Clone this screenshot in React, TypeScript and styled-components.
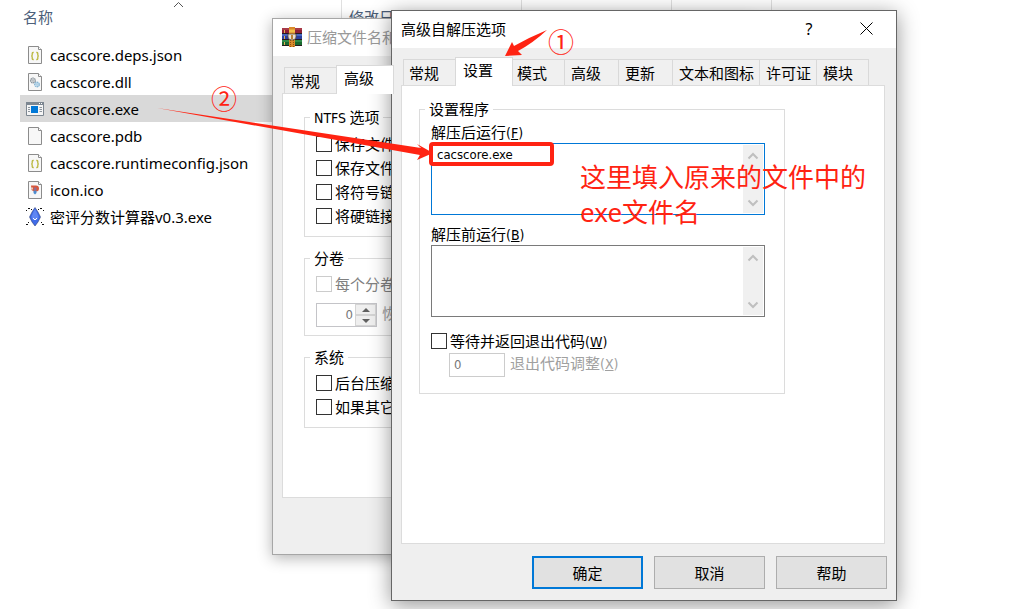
import React from 'react';
import styled, { createGlobalStyle } from 'styled-components';

const RED = '#ff2312';
const UI_FONT = '"Noto Sans", "Noto Sans CJK SC", sans-serif';
const DIALOG_FONT = '"Noto Sans CJK SC", "Noto Sans", sans-serif';
const TAHOMA = '"DejaVu Sans Condensed", "DejaVu Sans", sans-serif';

const GlobalStyle = createGlobalStyle`
  *, *::before, *::after { box-sizing: border-box; }
  body { margin: 0; background: #fff; color: #000; font-family: ${DIALOG_FONT}; font-size: 15px; }
  button, input, textarea { font: inherit; color: inherit; }
`;

const Desktop = styled.main`
  position: relative;
  min-height: 100vh;
  overflow: hidden;
`;

/* ---------- file list ---------- */

const Explorer = styled.section`
  padding-left: 20px;
`;

const HeaderRow = styled.div`
  display: grid;
  grid-template-columns: 322px 180px 150px 100px;
  height: 33px;
  margin-bottom: 8px;
  color: #4c607a;
`;

const HeaderCell = styled.div`
  position: relative;
  border-right: 1px solid #e0e0e0;
  padding: 6px 0 0 3px;
  line-height: 22px;
  &:nth-child(2) { padding-left: 7px; }
`;

const SortMark = styled.svg`
  position: absolute;
  top: 0;
  left: 153px;
`;

const FileList = styled.ul`
  list-style: none;
  margin: 0;
  padding: 0;
  width: 752px;
  font-family: ${UI_FONT};
`;

const FileRow = styled.li<{ $selected?: boolean }>`
  display: flex;
  align-items: center;
  gap: 5px;
  height: 27px;
  padding-left: 5px;
  background: ${(p) => (p.$selected ? '#d9d9d9' : 'transparent')};
`;

/* ---------- windows ---------- */

const Window = styled.section<{ $x: number; $y: number; $w: number; $active?: boolean }>`
  position: absolute;
  left: ${(p) => p.$x}px;
  top: ${(p) => p.$y}px;
  width: ${(p) => p.$w}px;
  border: 1px solid ${(p) => (p.$active ? '#666' : '#a6a6a6')};
  background: #efefef;
  box-shadow: ${(p) => (p.$active ? '0 4px 20px rgba(0,0,0,.42)' : '0 3px 14px rgba(0,0,0,.3)')};
`;

const TitleBar = styled.header<{ $inactive?: boolean }>`
  display: flex;
  align-items: center;
  gap: 5px;
  height: 37px;
  padding: 0 4px 2px 9px;
  background: #fff;
  color: ${(p) => (p.$inactive ? '#999' : '#000')};
`;

const Title = styled.h1`
  flex: 1;
  margin: 0;
  font-size: 15px;
  font-weight: 400;
  line-height: 20px;
`;

const CaptionButton = styled.button`
  display: grid;
  place-items: center;
  width: 52px;
  height: 35px;
  padding: 0;
  border: 0;
  background: none;
  font-size: 16px;
  font-family: ${UI_FONT};
`;

const TabBar = styled.div`
  display: flex;
  align-items: flex-end;
  height: 37px;
  padding: 0 11px;
`;

const Tab = styled.button<{ $w: number; $selected?: boolean; $indent?: number }>`
  width: ${(p) => p.$w}px;
  height: ${(p) => (p.$selected ? 29 : 26)}px;
  margin-bottom: ${(p) => (p.$selected ? -1 : 0)}px;
  padding: 0 0 ${(p) => (p.$selected ? 4 : 0)}px ${(p) => p.$indent ?? 6}px;
  border: 1px solid #d9d9d9;
  border-bottom: 0;
  border-left-width: ${(p) => (p.$selected ? 1 : 0)}px;
  background: ${(p) => (p.$selected ? '#fff' : '#f0f0f0')};
  text-align: left;
  white-space: nowrap;
  line-height: 20px;
  z-index: ${(p) => (p.$selected ? 1 : 0)};
  &:first-child { border-left-width: 1px; }
  &:has(+ [aria-selected='true']) { border-right-width: 0; }
`;

const Panel = styled.div<{ $minHeight: number }>`
  min-height: ${(p) => p.$minHeight}px;
  margin: 0 11px 0 9px;
  padding: 13px 99px 0 17px;
  border: 1px solid #dcdcdc;
  background: #fff;
`;

const BackPanel = styled(Panel)`
  padding: 13px 20px 0 21px;
`;

const Group = styled.fieldset`
  min-width: 0;
  margin: 0 0 11px;
  padding: 4px 11px 8px;
  border: 1px solid #dcdcdc;
`;

const Legend = styled.legend`
  margin-left: -6px;
  padding: 0 4px;
  line-height: 20px;
`;

const CheckRow = styled.div<{ $disabled?: boolean }>`
  display: flex;
  align-items: center;
  gap: 3px;
  height: 24px;
  color: ${(p) => (p.$disabled ? '#808080' : '#000')};
  white-space: nowrap;
  line-height: 20px;
`;

const CheckBox = styled.input.attrs({ type: 'checkbox' })`
  appearance: none;
  width: 16px;
  height: 16px;
  margin: 0;
  border: 1px solid #333;
  background: #fff;
  &:disabled { border-color: #ccc; }
`;

const SpinRow = styled.div`
  display: flex;
  gap: 5px;
  height: 24px;
  margin-top: 7px;
  color: #a0a0a0;
  line-height: 20px;
`;

const Spin = styled.div`
  display: flex;
  width: 61px;
  border: 1px solid #c4c4c8;
`;

const SpinInput = styled.input`
  flex: 1;
  min-width: 0;
  border: 0;
  padding: 0 2px 0 0;
  background: #fff;
  color: #777;
  text-align: right;
  font-family: ${TAHOMA};
  font-size: 13px;
`;

const SpinButtons = styled.div`
  display: grid;
  grid-template-rows: 1fr 1fr;
  width: 21px;
  background: #efefef;
`;

const SpinButton = styled.button`
  display: grid;
  place-items: center;
  padding: 0;
  border: 1px solid #d4d4d4;
  background: none;
`;

const FieldLabel = styled.label`
  display: block;
  height: 21px;
  line-height: 20px;
`;

const Latin = styled.span`
  font-family: ${TAHOMA};
  font-size: 14px;
`;

const Memo = styled.div<{ $focused?: boolean }>`
  display: flex;
  height: 72px;
  margin-bottom: 9px;
  padding: 1px;
  border: 1px solid ${(p) => (p.$focused ? '#0078d7' : '#7a7a7a')};
  background: #fff;
`;

const MemoText = styled.textarea`
  flex: 1;
  min-width: 0;
  margin: 0;
  padding: 1px 4px;
  border: 0;
  outline: 0;
  resize: none;
  overflow: hidden;
  background: transparent;
  font-family: ${TAHOMA};
  font-size: 13px;
  line-height: 18px;
`;

const ScrollBar = styled.div`
  display: flex;
  flex-direction: column;
  justify-content: space-between;
  width: 20px;
  background: #f0f0f0;
`;

const ScrollButton = styled.button`
  display: grid;
  place-items: center;
  height: 21px;
  padding: 0;
  border: 0;
  background: none;
`;

const ExitOptions = styled.div`
  padding-top: 3px;
`;

const ExitRow = styled.div`
  display: flex;
  gap: 5px;
  height: 24px;
  margin-left: 18px;
  color: #a0a0a0;
  line-height: 20px;
`;

const ExitInput = styled.input`
  width: 56px;
  padding: 0 4px;
  border: 1px solid #ccc;
  background: #fff;
  color: #777;
  font-family: ${TAHOMA};
  font-size: 13px;
`;

const SetupGroup = styled(Group)`
  padding: 3px 19px 16px 11px;
`;

const Footer = styled.footer`
  display: flex;
  justify-content: flex-end;
  gap: 11px;
  min-height: 56px;
  padding: 12px 9px 11px;
`;

const PushButton = styled.button<{ $primary?: boolean }>`
  width: 111px;
  height: 33px;
  padding: 0;
  border: ${(p) => (p.$primary ? '2px solid #0078d7' : '1px solid #adadad')};
  background: #e1e1e1;
  line-height: 20px;
`;

/* ---------- red marks over the windows ---------- */

const Arrows = styled.svg`
  position: absolute;
  left: 0;
  top: 0;
  pointer-events: none;
`;

const Mark = styled.span<{ $x: number; $y: number }>`
  position: absolute;
  left: ${(p) => p.$x}px;
  top: ${(p) => p.$y}px;
  color: ${RED};
  font-size: 26px;
  line-height: 30px;
`;

const Highlight = styled.div`
  position: absolute;
  left: 429px;
  top: 142px;
  width: 125px;
  height: 24px;
  border: 4px solid ${RED};
  border-radius: 4px;
  pointer-events: none;
`;

const Note = styled.p`
  position: absolute;
  left: 580px;
  top: 160px;
  margin: 0;
  color: ${RED};
  font-family: ${UI_FONT};
  font-size: 26px;
  line-height: 35px;
  white-space: nowrap;
`;

type IconKind = 'json' | 'dll' | 'exe' | 'blank' | 'ico' | 'app';

const Page = ({ children }: { children?: React.ReactNode }) => (
  <>
    <path d="M3.5 1.5h10l3 3v14h-13z" fill="#f7f7f7" stroke="#8c8c8c" />
    <path d="M13.5 1.5v3h3" fill="#fff" stroke="#8c8c8c" />
    {children}
  </>
);

const FileIcon = ({ kind }: { kind: IconKind }) => (
  <svg width="20" height="20" viewBox="0 0 20 20" aria-hidden="true">
    {kind === 'json' && (
      <Page>
        <path
          d="M8.700 7.500H8q-.8 0-.8.9v1.500q0 1-1 1 1 0 1 1v1.600q0 1 .8 1h.7M11.300 7.500h.7q.8 0 .8.9v1.500q0 1 1 1-1 0-1 1v1.600q0 1-.8 1h-.7"
          fill="none"
          stroke="#b9b63c"
          strokeWidth="1.3"
        />
      </Page>
    )}
    {kind === 'blank' && <Page />}
    {kind === 'dll' && (
      <Page>
        <circle cx="8" cy="8.500" r="2.400" fill="#eee" stroke="#8c969e" strokeWidth="1.300" strokeDasharray="1.500 .4" />
        <circle cx="8" cy="8.500" r=".9" fill="none" stroke="#8c969e" strokeWidth=".7" />
        <circle cx="12" cy="12.500" r="2.300" fill="#eaf4fb" stroke="#7fb2d2" strokeWidth="1.300" strokeDasharray="1.500 .4" />
        <circle cx="12" cy="12.500" r=".9" fill="none" stroke="#7fb2d2" strokeWidth=".7" />
      </Page>
    )}
    {kind === 'exe' && (
      <>
        <path d="M1.500 3.500h17v13h-17z" fill="#f5f5f5" stroke="#7d8791" />
        <path d="M1 3h18v3H1z" fill="#7d8791" />
        <path d="M14 4.500h1M16 4.500h1" stroke="#fff" />
        <path d="M6 7h7v7H6z" fill="#0078d7" />
        <path d="M3 8.500h2M3 10.500h2M3 12.500h2M14.500 8.500H17M14.500 10.500H17M14.500 12.500H17" stroke="#8c949c" />
      </>
    )}
    {kind === 'ico' && (
      <Page>
        <path d="M6 5.500h5q3 0 3 3t-3 3H9L6.500 10z" fill="#d8573c" />
        <path d="M6 7.500h2v2H6z" fill="#eec3b6" />
        <path d="M9 7.500h2.500V10H9z" fill="#8b6f96" />
        <path d="M8.500 10.500h3v2.500l-1.500 1.500-1.500-1.500z" fill="#4c8bd0" />
      </Page>
    )}
    {kind === 'app' && (
      <>
        <path
          d="M3 1.500h2M1.500 3v1M15 1.500h2M18.500 3v1M1 17.500h2M3 15.500h1M17 17.500h2M16 15.500h1M6 2.500h1M13 2.500h1"
          stroke="#111"
          fill="none"
        />
        <path d="M10 .500 13 5l2.500 5L13 15l-3 4-3-4-2.500-5L7 5z" fill="#3f6be8" stroke="#1b2a66" strokeWidth=".5" />
        <path d="M10 2 12 6l1.500 4-1.500 3H8l-1.500-3L8 6z" fill="#5f86f2" />
        <path d="M8 11 10 13l2-2" stroke="#fff" fill="none" />
      </>
    )}
  </svg>
);

const ArchiveIcon = () => (
  <svg width="20" height="20" viewBox="0 0 20 20" aria-hidden="true">
    <path d="M0 1h20v6H0z" fill="#8e1f35" />
    <path d="M0 1h20v2H0z" fill="#a83a48" />
    <path d="M0 7h20v6H0z" fill="#2a3f9e" />
    <path d="M0 7h20v2H0z" fill="#4866c0" />
    <path d="M0 13h20v6H0z" fill="#18682f" />
    <path d="M0 13h20v2H0z" fill="#2f8b48" />
    <path d="M0 6.500h20M0 12.500h20M0 18.500h20" stroke="#281a20" />
    <path d="M2.500 3v3M2.500 9v3M2.500 15v3" stroke="#e2b352" />
    <path d="M7 0h6v20H7z" fill="#d88a2b" />
    <path d="M8.500 13v7M11.500 13v7" stroke="#8d5115" strokeDasharray="1 1" />
    <path d="M6 7h8v3q0 3-4 3t-4-3z" fill="#e7e1d5" stroke="#5a4a38" strokeWidth=".8" />
    <path d="M9 8h2v4H9z" fill="#b98235" />
    <path d="M7 2.500h6v3H7z" fill="#f2bf48" />
  </svg>
);

const Chevron = ({ down }: { down?: boolean }) => (
  <svg width="12" height="8" viewBox="0 0 12 8" aria-hidden="true">
    <path d={down ? 'M1.500 1.500 6 6l4.500-4.500' : 'M1.500 6.500 6 2l4.500 4.500'} fill="none" stroke="#bfbfbf" strokeWidth="2" />
  </svg>
);

const Triangle = ({ down }: { down?: boolean }) => (
  <svg width="8" height="4" viewBox="0 0 8 4" aria-hidden="true">
    <path d={down ? 'M0 0h8L4 4z' : 'M0 4h8L4 0z'} fill="#606060" />
  </svg>
);

const files: { name: string; kind: IconKind; selected?: boolean }[] = [
  { name: 'cacscore.deps.json', kind: 'json' },
  { name: 'cacscore.dll', kind: 'dll' },
  { name: 'cacscore.exe', kind: 'exe', selected: true },
  { name: 'cacscore.pdb', kind: 'blank' },
  { name: 'cacscore.runtimeconfig.json', kind: 'json' },
  { name: 'icon.ico', kind: 'ico' },
  { name: '密评分数计算器v0.3.exe', kind: 'app' },
];

const tabs: { name: string; w: number; selected?: boolean; indent?: number }[] = [
  { name: '常规', w: 52, indent: 5 },
  { name: '设置', w: 58, selected: true, indent: 7 },
  { name: '模式', w: 52, indent: 4 },
  { name: '高级', w: 54 },
  { name: '更新', w: 54 },
  { name: '文本和图标', w: 87 },
  { name: '许可证', w: 57 },
  { name: '模块', w: 52 },
];

const Check = ({ id, text, disabled, hotkey }: { id: string; text: string; disabled?: boolean; hotkey?: string }) => (
  <CheckRow $disabled={disabled}>
    <CheckBox id={id} disabled={disabled} />
    <label htmlFor={id}>
      {text}
      {hotkey && <Latin>(<u>{hotkey}</u>)</Latin>}
    </label>
  </CheckRow>
);

const MemoField = ({ id, label, hotkey, value, focused }: { id: string; label: string; hotkey: string; value: string; focused?: boolean }) => (
  <>
    <FieldLabel htmlFor={id}>
      {label}
      <Latin>(<u>{hotkey}</u>)</Latin>
    </FieldLabel>
    <Memo $focused={focused}>
      <MemoText id={id} defaultValue={value} spellCheck={false} />
      <ScrollBar>
        <ScrollButton type="button" aria-label="向上滚动"><Chevron /></ScrollButton>
        <ScrollButton type="button" aria-label="向下滚动"><Chevron down /></ScrollButton>
      </ScrollBar>
    </Memo>
  </>
);

export default function App() {
  return (
    <Desktop>
      <GlobalStyle />
      <Explorer>
        <HeaderRow>
          <HeaderCell>
            名称
            <SortMark width="11" height="8" viewBox="0 0 11 8" aria-hidden="true">
              <path d="M1 7 5.500 2.500 10 7" fill="none" stroke="#555" />
            </SortMark>
          </HeaderCell>
          <HeaderCell>修改日</HeaderCell>
          <HeaderCell />
          <HeaderCell />
        </HeaderRow>
        <FileList>
          {files.map((f) => (
            <FileRow key={f.name} $selected={f.selected}>
              <FileIcon kind={f.kind} />
              <span>{f.name}</span>
            </FileRow>
          ))}
        </FileList>
      </Explorer>

      <Window $x={272} $y={18} $w={480}>
        <TitleBar $inactive>
          <ArchiveIcon />
          <Title>压缩文件名和</Title>
        </TitleBar>
        <TabBar role="tablist">
          <Tab type="button" role="tab" $w={52} $indent={5}>常规</Tab>
          <Tab type="button" role="tab" aria-selected="true" $w={58} $selected $indent={7}>高级</Tab>
        </TabBar>
        <BackPanel $minHeight={405}>
          <Group>
            <Legend><Latin>NTFS</Latin> 选项</Legend>
            <Check id="ntfs-security" text="保存文件" />
            <Check id="ntfs-streams" text="保存文件" />
            <Check id="ntfs-symlinks" text="将符号链" />
            <Check id="ntfs-hardlinks" text="将硬链接" />
          </Group>
          <Group>
            <Legend>分卷</Legend>
            <Check id="volume-pause" text="每个分卷" disabled />
            <SpinRow>
              <Spin>
                <SpinInput id="recovery" defaultValue="0" disabled />
                <SpinButtons>
                  <SpinButton type="button" aria-label="增加"><Triangle /></SpinButton>
                  <SpinButton type="button" aria-label="减少"><Triangle down /></SpinButton>
                </SpinButtons>
              </Spin>
              <label htmlFor="recovery">恢</label>
            </SpinRow>
          </Group>
          <Group>
            <Legend>系统</Legend>
            <Check id="sys-background" text="后台压缩" />
            <Check id="sys-wait" text="如果其它" />
          </Group>
        </BackPanel>
        <Footer />
      </Window>

      <Window $x={391} $y={10} $w={506} $active>
        <TitleBar>
          <Title>高级自解压选项</Title>
          <CaptionButton type="button" aria-label="帮助信息">?</CaptionButton>
          <CaptionButton type="button" aria-label="关闭">
            <svg width="13" height="13" viewBox="0 0 13 13" aria-hidden="true">
              <path d="M.5.5l12 12M12.500.5l-12 12" stroke="#000" fill="none" />
            </svg>
          </CaptionButton>
        </TitleBar>
        <TabBar role="tablist">
          {tabs.map((t) => (
            <Tab key={t.name} type="button" role="tab" aria-selected={!!t.selected} $w={t.w} $selected={t.selected} $indent={t.indent}>
              {t.name}
            </Tab>
          ))}
        </TabBar>
        <Panel $minHeight={459}>
          <SetupGroup>
            <Legend>设置程序</Legend>
            <MemoField id="run-after" label="解压后运行" hotkey="F" value="cacscore.exe" focused />
            <MemoField id="run-before" label="解压前运行" hotkey="B" value="" />
            <ExitOptions>
              <Check id="wait-exit" text="等待并返回退出代码" hotkey="W" />
              <ExitRow>
                <ExitInput id="exit-adjust" defaultValue="0" disabled />
                <label htmlFor="exit-adjust">
                  退出代码调整<Latin>(<u>X</u>)</Latin>
                </label>
              </ExitRow>
            </ExitOptions>
          </SetupGroup>
        </Panel>
        <Footer>
          <PushButton type="button" $primary>确定</PushButton>
          <PushButton type="button">取消</PushButton>
          <PushButton type="button">帮助</PushButton>
        </Footer>
      </Window>

      <Arrows width="600" height="200" viewBox="0 0 600 200" aria-hidden="true">
        <path d="M547 30 Q530 37 514 46L512 42 505 56 522 55 518 51Q533 43 547 30z" fill={RED} />
        <path d="M157 108 421 148 417 144 433 153 417 160 420 155z" fill={RED} />
      </Arrows>
      <Highlight />
      <Mark $x={548} $y={26}>①</Mark>
      <Mark $x={211} $y={83}>②</Mark>
      <Note>
        这里填入原来的文件中的
        <br />
        exe文件名
      </Note>
    </Desktop>
  );
}
